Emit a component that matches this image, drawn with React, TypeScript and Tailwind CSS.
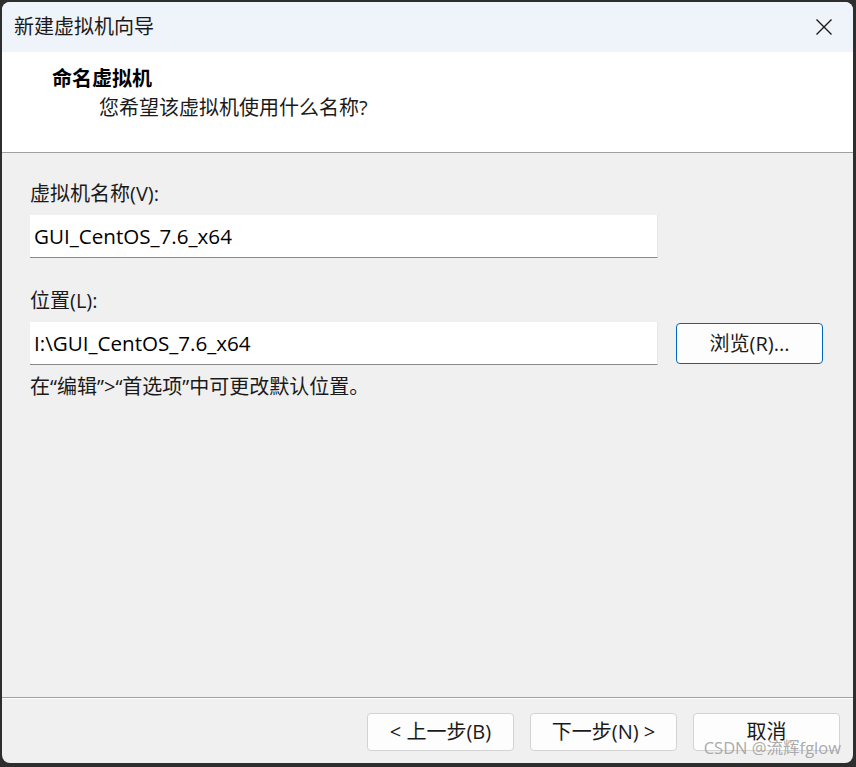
import React from 'react'

// New VM wizard — "name the virtual machine" page

const FONT = '"Open Sans", "Noto Sans", "Noto Sans CJK SC", sans-serif'

function WizardButton({ children, primary }: { children: React.ReactNode; primary?: boolean }) {
  return (
    <button
      className={
        'w-[147px] rounded-[4px] bg-[#fdfdfd] text-[20px] text-[#1a1a1a] flex items-center justify-center ' +
        (primary ? 'h-[41px] border border-[#0067c0]' : 'h-[38px] border border-[#d3d3d3]')
      }
    >
      {children}
    </button>
  )
}

function Field({ label, value }: { label: string; value: string }) {
  return (
    <div className="flex flex-col">
      <div className="h-6 leading-6 text-[20px] text-[#1a1a1a]">{label}</div>
      <div className="mt-[9px] h-[43px] w-[628px] bg-white border-b border-[#8a8a8a] border-r border-r-[#e6e6e6] flex items-center pl-1 text-[20.6px] text-black">
        {value}
      </div>
    </div>
  )
}

export default function App() {
  return (
    <div className="w-[856px] h-[767px] bg-[#2e2e2e] pt-[2px] pl-[2px]" style={{ fontFamily: FONT }}>
      <div className="relative w-[851px] h-[761px] rounded-[8px] overflow-hidden bg-[#f0f0f0] flex flex-col">

        {/* Title bar */}
        <div className="h-[50px] bg-[#eff3fa] flex items-center pl-3 pr-5 flex-shrink-0">
          <span className="text-[20px] text-[#1a1a1a]">新建虚拟机向导</span>
          <svg className="ml-auto" width="18" height="18" viewBox="0 0 18 18">
            <path d="M1.5 1.5 L16.5 16.5 M16.5 1.5 L1.5 16.5" stroke="#1a1a1a" strokeWidth="1.4" fill="none" />
          </svg>
        </div>

        {/* Header */}
        <div className="h-[101px] bg-white border-b border-[#a0a0a0] pl-[50px] pt-[15px] flex-shrink-0">
          <div className="h-6 leading-6 text-[20px] font-bold text-black">命名虚拟机</div>
          <div className="h-6 leading-6 mt-[5px] pl-[47px] text-[20px] text-[#1a1a1a]">您希望该虚拟机使用什么名称?</div>
        </div>

        {/* Body */}
        <div className="flex-1 pl-[28px] pt-[29px]">
          <Field label="虚拟机名称(V):" value="GUI_CentOS_7.6_x64" />
          <div className="mt-[31px] flex items-end gap-[18px]">
            <Field label="位置(L):" value="I:\GUI_CentOS_7.6_x64" />
            <div className="mb-[1px]">
              <WizardButton primary>浏览(R)...</WizardButton>
            </div>
          </div>
          <div className="mt-[10px] h-6 leading-6 text-[20px] text-[#1a1a1a]">
            在“编辑”&gt;“首选项”中可更改默认位置。
          </div>
        </div>

        {/* Footer */}
        <div className="h-[66px] border-t border-[#a0a0a0] flex-shrink-0">
          <div className="h-full border-t border-white flex justify-end gap-4 pr-[13px] pt-[14px]">
            <WizardButton>&lt; 上一步(B)</WizardButton>
            <WizardButton>下一步(N) &gt;</WizardButton>
            <WizardButton>取消</WizardButton>
          </div>
        </div>

        {/* Watermark */}
        <div className="absolute right-[12px] bottom-[7px] text-[16.5px] text-[#a0a0a0]/90 leading-none">
          CSDN @流辉fglow
        </div>
      </div>
    </div>
  )
}
